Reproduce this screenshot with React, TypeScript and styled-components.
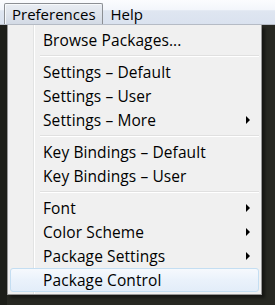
import React from "react";
import styled, { createGlobalStyle } from "styled-components";

const GlobalStyle = createGlobalStyle`
  body {
    margin: 0;
    background: #272822;
    font-family: "Open Sans", "Noto Sans", "Liberation Sans", sans-serif;
  }
`;

const Page = styled.div`
  width: 275px;
  height: 305px;
  background: #272822;
  display: flex;
  flex-direction: column;
  overflow: hidden;
`;

const MenuBar = styled.div`
  height: 25px;
  display: flex;
  align-items: flex-end;
  padding-left: 4px;
  box-sizing: border-box;
  background: linear-gradient(#fbfcfe 0%, #f3f6fb 40%, #dfe6f1 45%, #dae2ef 100%);
  border-bottom: 1px solid #b6bcc6;
`;

const BarItem = styled.div<{ $active?: boolean }>`
  height: 21px;
  box-sizing: border-box;
  padding: 0 6px 0 7px;
  display: flex;
  align-items: center;
  font-size: 15px;
  color: #000;
  border: 1px solid ${(p) => (p.$active ? "#8c8f94" : "transparent")};
  border-bottom: none;
  border-radius: 2px 2px 0 0;
  background: ${(p) =>
    p.$active ? "linear-gradient(#e9edf3 0%, #dfe4ec 50%, #d3dae5 100%)" : "transparent"};
  box-shadow: ${(p) => (p.$active ? "inset 1px 1px 0 #f7f9fb" : "none")};
`;

const Content = styled.div`
  flex: 1;
  display: flex;
  background: linear-gradient(90deg, #1d1e19 0 7px, #272822 7px);
`;

const Menu = styled.div`
  margin-left: 7px;
  width: 255px;
  height: 270px;
  box-sizing: border-box;
  padding: 3px 2px 2px 2px;
  background: linear-gradient(90deg, #f0f0f0 0 25px, #e2e3e3 25px 26px, #ffffff 26px 27px, #f0f0f0 27px);
  border: 1px solid #979797;
  border-top: none;
  box-shadow: 3px 3px 3px rgba(0, 0, 0, 0.45);
  display: flex;
  flex-direction: column;
`;

const Item = styled.div<{ $hover?: boolean }>`
  height: 24px;
  flex-shrink: 0;
  box-sizing: border-box;
  display: flex;
  align-items: center;
  justify-content: space-between;
  padding: 0 8px 0 32px;
  font-size: 15.5px;
  letter-spacing: 0.1px;
  color: #000;
  border: 1px solid ${(p) => (p.$hover ? "#c4def2" : "transparent")};
  border-radius: 3px;
  background: ${(p) =>
    p.$hover ? "linear-gradient(#f6f9fd 0%, #eaf2fb 50%, #e3edf9 100%)" : "transparent"};
`;

const Separator = styled.div`
  height: 8px;
  flex-shrink: 0;
  display: flex;
  align-items: center;
  padding-left: 30px;

  &::after {
    content: "";
    flex: 1;
    height: 1px;
    background: #e0e0e0;
    border-bottom: 1px solid #ffffff;
  }
`;

const Arrow = styled.span`
  width: 0;
  height: 0;
  border-top: 4px solid transparent;
  border-bottom: 4px solid transparent;
  border-left: 4px solid #000;
`;

type Entry = { label: string; sub?: boolean; hover?: boolean } | "sep";

const entries: Entry[] = [
  { label: "Browse Packages..." },
  "sep",
  { label: "Settings – Default" },
  { label: "Settings – User" },
  { label: "Settings – More", sub: true },
  "sep",
  { label: "Key Bindings – Default" },
  { label: "Key Bindings – User" },
  "sep",
  { label: "Font", sub: true },
  { label: "Color Scheme", sub: true },
  { label: "Package Settings", sub: true },
  { label: "Package Control", hover: true },
];

const App = () => (
  <Page>
    <GlobalStyle />
    <MenuBar>
      <BarItem $active>Preferences</BarItem>
      <BarItem>Help</BarItem>
    </MenuBar>
    <Content>
      <Menu>
        {entries.map((e, i) =>
          e === "sep" ? (
            <Separator key={i} />
          ) : (
            <Item key={i} $hover={e.hover}>
              <span>{e.label}</span>
              {e.sub && <Arrow />}
            </Item>
          )
        )}
      </Menu>
    </Content>
  </Page>
);

export default App;
